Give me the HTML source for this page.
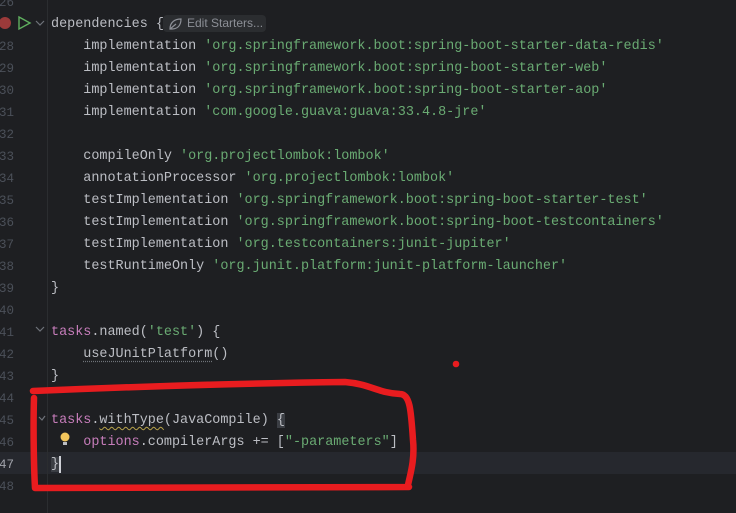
<!DOCTYPE html>
<html><head><style>
html,body{margin:0;padding:0;}
body{width:736px;height:513px;background:#1e1f22;position:relative;overflow:hidden;font-family:"Liberation Mono",monospace;font-size:13.45px;color:#bcbec4;}
.ln{position:absolute;left:-8px;width:22px;text-align:right;color:#4b5059;font-size:12.5px;margin-top:2px;}
.l{position:absolute;left:51px;white-space:pre;height:22px;line-height:22px;margin-top:2px;}
.s{color:#6aab73}.p{color:#c77dbb}
.sep{position:absolute;left:47px;top:0;width:1px;height:513px;background:#2b2d30;}
.cur{position:absolute;left:0;top:452px;width:736px;height:22px;background:#26282e;}
</style></head><body>
<div class="cur"></div>
<div class="sep"></div>
<div class="ln" style="top:-10px;line-height:22px">26</div>
<div class="ln" style="top:34px;line-height:22px">28</div>
<div class="ln" style="top:56px;line-height:22px">29</div>
<div class="ln" style="top:78px;line-height:22px">30</div>
<div class="ln" style="top:100px;line-height:22px">31</div>
<div class="ln" style="top:122px;line-height:22px">32</div>
<div class="ln" style="top:144px;line-height:22px">33</div>
<div class="ln" style="top:166px;line-height:22px">34</div>
<div class="ln" style="top:188px;line-height:22px">35</div>
<div class="ln" style="top:210px;line-height:22px">36</div>
<div class="ln" style="top:232px;line-height:22px">37</div>
<div class="ln" style="top:254px;line-height:22px">38</div>
<div class="ln" style="top:276px;line-height:22px">39</div>
<div class="ln" style="top:298px;line-height:22px">40</div>
<div class="ln" style="top:320px;line-height:22px">41</div>
<div class="ln" style="top:342px;line-height:22px">42</div>
<div class="ln" style="top:364px;line-height:22px">43</div>
<div class="ln" style="top:386px;line-height:22px">44</div>
<div class="ln" style="top:408px;line-height:22px">45</div>
<div class="ln" style="top:430px;line-height:22px">46</div>
<div class="ln" style="top:452px;line-height:22px;color:#a1a3ab">47</div>
<div class="ln" style="top:474px;line-height:22px">48</div>
<svg style="position:absolute;left:0;top:0" width="50" height="513">
<circle cx="5" cy="23" r="6" fill="#9b3a3a"/>
<path d="M19 17 L30 23 L19 29 Z" fill="none" stroke="#5fb05f" stroke-width="1.4"/>
<path d="M36 21 L40 25 L44 21" fill="none" stroke="#6f737a" stroke-width="1.2"/>
<path d="M36 327 L40 331 L44 327" fill="none" stroke="#6f737a" stroke-width="1.2"/>
<path d="M39 417 L42 420 L45 416" fill="none" stroke="#6f737a" stroke-width="1.2"/>
</svg>
<div class="l" style="top:12px">dependencies {</div>
<div style="position:absolute;left:163px;top:15px;width:103px;height:17px;background:#2b2d30;border-radius:4px;font-family:'Liberation Sans',sans-serif;font-size:12px;color:#8c8f96;line-height:17px;padding-left:24px;box-sizing:border-box;">Edit Starters...</div>
<svg style="position:absolute;left:168px;top:17px" width="16" height="14"><path d="M2 12 C2 5 7 2 13 2 C13 9 9 12 4 12 Z M2 12 L8 7" fill="none" stroke="#8c8f96" stroke-width="1.2"/></svg>
<div class="l" style="top:34px">    implementation <span class="s">'org.springframework.boot:spring-boot-starter-data-redis'</span></div>
<div class="l" style="top:56px">    implementation <span class="s">'org.springframework.boot:spring-boot-starter-web'</span></div>
<div class="l" style="top:78px">    implementation <span class="s">'org.springframework.boot:spring-boot-starter-aop'</span></div>
<div class="l" style="top:100px">    implementation <span class="s">'com.google.guava:guava:33.4.8-jre'</span></div>
<div class="l" style="top:144px">    compileOnly <span class="s">'org.projectlombok:lombok'</span></div>
<div class="l" style="top:166px">    annotationProcessor <span class="s">'org.projectlombok:lombok'</span></div>
<div class="l" style="top:188px">    testImplementation <span class="s">'org.springframework.boot:spring-boot-starter-test'</span></div>
<div class="l" style="top:210px">    testImplementation <span class="s">'org.springframework.boot:spring-boot-testcontainers'</span></div>
<div class="l" style="top:232px">    testImplementation <span class="s">'org.testcontainers:junit-jupiter'</span></div>
<div class="l" style="top:254px">    testRuntimeOnly <span class="s">'org.junit.platform:junit-platform-launcher'</span></div>
<div class="l" style="top:276px">}</div>
<div class="l" style="top:320px"><span class="p">tasks</span>.named(<span class="s">'test'</span>) {</div>
<div class="l" style="top:342px">    <span style="text-decoration:underline dotted #6f737a;text-underline-offset:4px">useJUnitPlatform</span>()</div>
<div class="l" style="top:364px">}</div>
<div class="l" style="top:408px"><span class="p">tasks</span>.<span style="text-decoration:underline wavy #b8a34a;text-underline-offset:3px;text-decoration-thickness:1px">withType</span>(JavaCompile) <span style="background:#3b3e44">{</span></div>
<div class="l" style="top:430px">    <span class="p">options</span>.compilerArgs += [<span class="s">"-parameters"</span>]</div>
<div class="l" style="top:452px"><span style="background:#3b3e44">}</span></div>
<div style="position:absolute;left:59px;top:456px;width:1.5px;height:17px;background:#ced0d6"></div>
<svg style="position:absolute;left:0;top:0" width="736" height="513">
<circle cx="65" cy="437" r="4.5" fill="#f2c55c"/>
<rect x="63" y="442" width="4" height="3" fill="#bcbec4"/>
<circle cx="456" cy="364" r="3.3" fill="#e81c1f"/>
<path d="M33 391 C150 386 260 383 345 382 C370 384 378 393 400 394 C410 394 411 410 413 440 C415 460 410 475 408 485 M409 487 L35 488 C34 470 33 430 34 398" fill="none" stroke="#e81c1f" stroke-width="6.5" stroke-linecap="round" stroke-linejoin="round"/>
</svg>
</body></html>
